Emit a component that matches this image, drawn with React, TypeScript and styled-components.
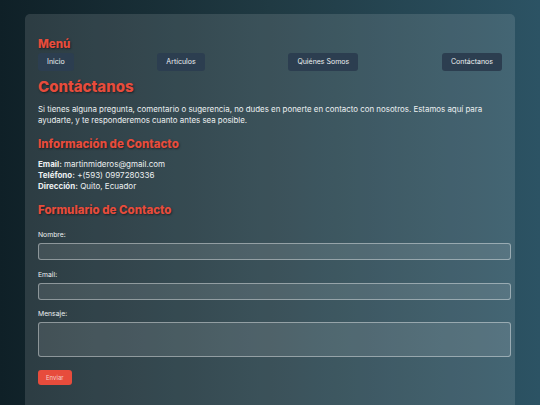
import React from 'react';
import styled, { createGlobalStyle } from 'styled-components';

const GlobalStyle = createGlobalStyle`
  html, body {
    margin: 0;
  }
  body {
    min-height: 405px;
    overflow: hidden;
    background: linear-gradient(to right, #0f2027, #203a43, #2c5364);
    font-family: Inter, "Noto Sans", sans-serif;
    color: #ecf0f1;
  }
`;

const Container = styled.main`
  margin: 14px 25px 0;
  padding: 23px 13px 16px;
  min-height: 391px;
  box-sizing: border-box;
  background: rgba(255, 255, 255, 0.12);
  border-radius: 5px 5px 0 0;
`;

const Heading = styled.h2<{ $size: number; $gap?: number }>`
  margin: ${(p) => p.$gap ?? 0}px 0 0;
  color: #e74c3c;
  font-size: ${(p) => p.$size}px;
  line-height: ${(p) => Math.round(p.$size * 1.25)}px;
  font-weight: 800;
  text-shadow: 1px 1px 2px rgba(0, 0, 0, 0.5);
`;

const Nav = styled.nav`
  display: flex;
  justify-content: space-between;
  margin: 2px 0 0;
`;

const NavButton = styled.a`
  display: block;
  padding: 5px 9px;
  background: #2c3e50;
  border-radius: 3px;
  color: #ecf0f1;
  font-size: 7px;
  line-height: 8px;
  text-decoration: none;
`;

const Text = styled.p`
  margin: 8px 0 0;
  font-size: 7.9px;
  line-height: 11px;
`;

const InfoList = styled.div`
  margin: 8px 0 0;
  font-size: 8px;
  line-height: 11px;
  strong {
    font-weight: 700;
  }
`;

const Form = styled.form`
  display: flex;
  flex-direction: column;
  margin-top: 14px;
`;

const Label = styled.label`
  font-size: 6.8px;
  line-height: 8px;
  margin-bottom: 4px;
`;

const Field = styled.input`
  box-sizing: border-box;
  width: calc(100% + 9px);
  height: 17px;
  margin-bottom: 10.5px;
  background: rgba(255, 255, 255, 0.1);
  border: 1px solid rgba(255, 255, 255, 0.4);
  border-radius: 3px;
`;

const Area = styled.textarea`
  box-sizing: border-box;
  width: calc(100% + 9px);
  height: 35px;
  margin-bottom: 13px;
  resize: none;
  background: rgba(255, 255, 255, 0.1);
  border: 1px solid rgba(255, 255, 255, 0.4);
  border-radius: 3px;
`;

const Submit = styled.button`
  align-self: flex-start;
  height: 15px;
  padding: 0 8px;
  border: none;
  border-radius: 3px;
  background: #e74c3c;
  color: #f5d0cb;
  font-family: inherit;
  font-size: 6px;
  line-height: 7px;
`;

export default function App() {
  return (
    <>
      <GlobalStyle />
      <Container>
        <Heading $size={11.5}>Menú</Heading>
        <Nav>
          <NavButton>Inicio</NavButton>
          <NavButton>Artículos</NavButton>
          <NavButton>Quiénes Somos</NavButton>
          <NavButton>Contáctanos</NavButton>
        </Nav>
        <Heading as="h1" $size={15} $gap={6}>Contáctanos</Heading>
        <Text>
          Si tienes alguna pregunta, comentario o sugerencia, no dudes en ponerte en contacto con nosotros. Estamos aquí para
          ayudarte, y te responderemos cuanto antes sea posible.
        </Text>
        <Heading $size={11.5} $gap={11}>Información de Contacto</Heading>
        <InfoList>
          <div><strong>Email:</strong> martinmideros@gmail.com</div>
          <div><strong>Teléfono:</strong> +(593) 0997280336</div>
          <div><strong>Dirección:</strong> Quito, Ecuador</div>
        </InfoList>
        <Heading $size={11.5} $gap={11}>Formulario de Contacto</Heading>
        <Form>
          <Label>Nombre:</Label>
          <Field type="text" />
          <Label>Email:</Label>
          <Field type="email" />
          <Label>Mensaje:</Label>
          <Area />
          <Submit type="button">Enviar</Submit>
        </Form>
      </Container>
    </>
  );
}
